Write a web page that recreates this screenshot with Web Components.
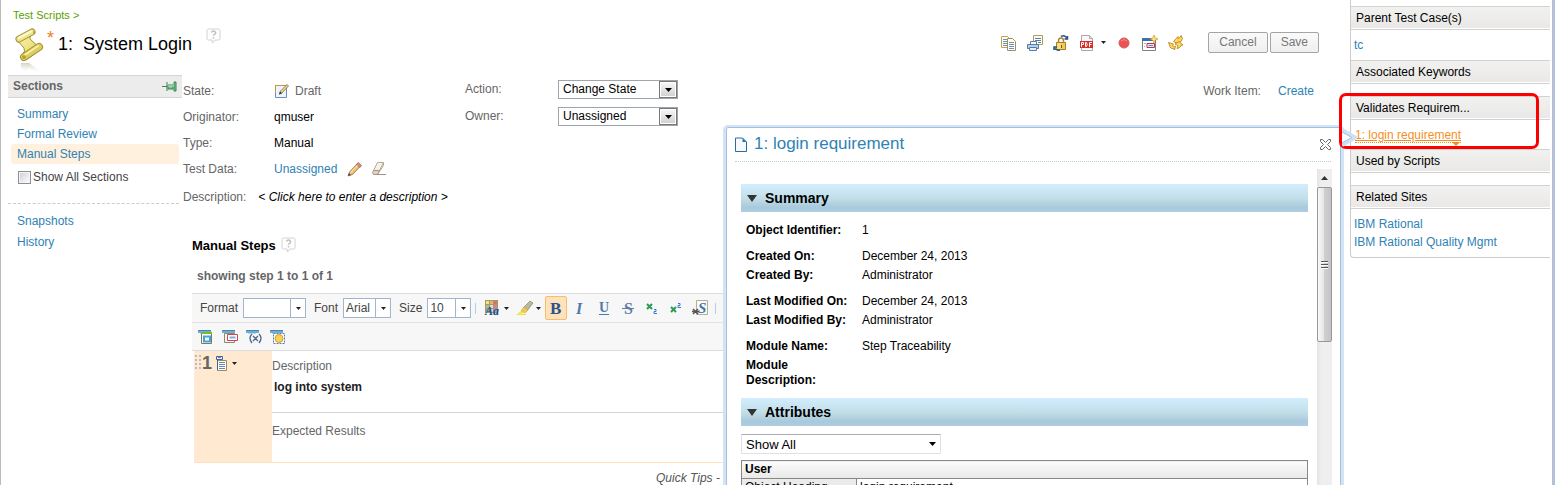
<!DOCTYPE html>
<html lang="en">
<head>
<meta charset="utf-8">
<title>1: System Login</title>
<style>
    html, body {
        margin: 0;
        height: 100%;
        overflow: hidden;
    }

    body {
        font-family: "Liberation Sans", Arial, sans-serif;
        font-size: 12px;
        line-height: 15px;
        color: #000;
        background: #fff;
        --qm-link: #2f82b4;
        --qm-label: #666;
        --qm-line: #d5d5d5;
        --qm-accent: #f3901d;
    }
</style>
</head>
<body>
<qm-app></qm-app>

<!--
    Application shell: editor on the left, link sidebar on the right
-->
<template id="qm-app-template">
    <style>
        :host {
            display: flex;
            position: relative;
            box-sizing: border-box;
            height: 100vh;
            overflow: hidden;
            border-left: 1px solid #bbb;
            border-right: 3px solid #b4bfd8;
        }

        main {
            flex: 1;
            min-width: 0;
            padding: 8px 31px 0 7px;
        }

        .columns {
            display: flex;
            gap: 1px;
        }

        .content {
            flex: 1;
            min-width: 0;
        }
    </style>
    <main>
        <qm-header></qm-header>
        <div class="columns">
            <qm-sections></qm-sections>
            <div class="content">
                <qm-properties></qm-properties>
                <qm-steps></qm-steps>
            </div>
        </div>
    </main>
    <qm-sidebar></qm-sidebar>
    <qm-preview heading="1: login requirement"></qm-preview>
</template>

<!--
    Breadcrumb, title and page actions
-->
<template id="qm-header-template">
    <style>
        :host { display: block; }

        .crumb {
            display: block;
            padding-left: 5px;
            font-size: 11px;
            color: #5da000;
            text-decoration: none;
        }

        header {
            display: flex;
            align-items: flex-start;
            height: 52px;
        }

        .script { margin: 5px 0 0 7px; }

        .star {
            padding: 8px 4px 0 3px;
            font-size: 18px;
            color: #ee7f22;
        }

        h1 {
            margin: 11px 14px 0 0;
            font-size: 18px;
            font-weight: normal;
            line-height: 20px;
            white-space: pre;
        }

        .help { margin-top: 5px; }

        .actions {
            display: flex;
            align-items: center;
            gap: 10px;
            margin: 9px 0 0 auto;
        }

        .menu {
            display: flex;
            align-items: center;
            gap: 6px;
        }

        .buttons {
            display: flex;
            gap: 2px;
            margin-left: 14px;
        }

        button {
            box-sizing: border-box;
            height: 21px;
            padding: 0 10px;
            font: inherit;
            color: #777;
            background: linear-gradient(#fafafa, #efefef);
            border: 1px solid #a5a5a5;
            border-radius: 2px;
        }
    </style>
    <a class="crumb" href="#">Test Scripts &gt;</a>
    <header>
        <qm-icon class="script" name="script"></qm-icon>
        <span class="star">*</span>
        <h1>1:  System Login</h1>
        <qm-icon class="help" name="help"></qm-icon>
        <div class="actions">
            <qm-icon name="copy"></qm-icon>
            <qm-icon name="print"></qm-icon>
            <qm-icon name="lock"></qm-icon>
            <span class="menu"><qm-icon name="pdf"></qm-icon><qm-icon name="arrow"></qm-icon></span>
            <qm-icon name="record"></qm-icon>
            <qm-icon name="window"></qm-icon>
            <qm-icon name="refresh"></qm-icon>
            <span class="buttons">
                <button type="button">Cancel</button>
                <button type="button">Save</button>
            </span>
        </div>
    </header>
</template>

<!--
    Section navigation
-->
<template id="qm-sections-template">
    <style>
        :host {
            display: block;
            flex: 0 0 174px;
        }

        h2 {
            display: flex;
            align-items: center;
            justify-content: space-between;
            height: 21px;
            margin: 0;
            padding: 0 5px;
            font-size: 12px;
            color: #666;
            background: #ececec;
            border: solid var(--qm-line);
            border-width: 1px 0;
        }

        nav {
            margin-right: 3px;
            padding: 6px 0 0 3px;
        }

        nav + nav {
            margin-top: 18px;
            padding: 7px 0 0;
            border-top: 1px dashed #ccc;
        }

        a {
            display: block;
            padding-left: 6px;
            line-height: 20px;
            color: var(--qm-link);
            text-decoration: none;
            border-radius: 3px;
        }

        nav + nav a {
            padding-left: 9px;
            line-height: 21px;
        }

        a.current { background: #fff1de; }

        label {
            display: flex;
            align-items: center;
            gap: 2px;
            padding: 6px 0 0 7px;
            color: #444;
        }

        input {
            appearance: none;
            width: 13px;
            height: 13px;
            margin: 0;
            background: linear-gradient(135deg, #c9ced6, #fff);
            border: 1px solid #8e8f8f;
            box-shadow: inset 0 0 0 1px #f4f4f4;
        }
    </style>
    <h2>Sections <qm-icon name="pin"></qm-icon></h2>
    <nav>
        <a href="#">Summary</a>
        <a href="#">Formal Review</a>
        <a href="#" class="current">Manual Steps</a>
        <label><input type="checkbox"> Show All Sections</label>
    </nav>
    <nav>
        <a href="#">Snapshots</a>
        <a href="#">History</a>
    </nav>
</template>

<!--
    Script properties (state, owner, test data)
-->
<template id="qm-properties-template">
    <style>
        :host {
            display: block;
            padding-top: 3px;
        }

        .fields {
            display: flex;
            align-items: flex-start;
        }

        .details { flex: 0 0 282px; }
        .choices { margin-top: -2px; }
        .work { margin-left: auto; }

        .muted { color: var(--qm-label); }

        a {
            color: var(--qm-link);
            text-decoration: none;
        }

        .work a { padding: 0 5px 0 17px; }
        .data { padding-right: 4px; }

        .description {
            display: flex;
            align-items: center;
            gap: 12px;
            height: 30px;
            font-style: italic;
        }

        .description .muted { font-style: normal; }
    </style>
    <div class="fields">
        <div class="details">
            <qm-field label="State:"><qm-icon name="draft"></qm-icon><span class="muted">Draft</span></qm-field>
            <qm-field label="Originator:">qmuser</qm-field>
            <qm-field label="Type:">Manual</qm-field>
            <qm-field label="Test Data:">
                <a class="data" href="#">Unassigned</a>
                <qm-icon name="pencil"></qm-icon>
                <qm-icon name="eraser"></qm-icon>
            </qm-field>
        </div>
        <div class="choices">
            <qm-select label="Action:" value="Change State"></qm-select>
            <qm-select label="Owner:" value="Unassigned"></qm-select>
        </div>
        <qm-field class="work" label="Work Item:" inline><a href="#">Create</a></qm-field>
    </div>
    <div class="description"><span class="muted">Description:</span><span>&lt; Click here to enter a description &gt;</span></div>
</template>

<template id="qm-field-template">
    <style>
        :host {
            display: flex;
            align-items: center;
            height: 26px;
        }

        .label {
            width: 91px;
            color: var(--qm-label);
        }

        :host([inline]) .label { width: auto; }

        .value {
            display: flex;
            align-items: center;
            gap: 6px;
        }
    </style>
    <span class="label"></span>
    <span class="value"><slot></slot></span>
</template>

<template id="qm-select-template">
    <style>
        :host {
            display: flex;
            align-items: center;
            height: 27px;
        }

        label {
            width: 93px;
            color: var(--qm-label);
        }

        .box {
            display: grid;
            grid-template-columns: 1fr 18px;
            width: 120px;
            height: 19px;
            box-sizing: border-box;
            border: 1px solid #9ea5ad;
        }

        select {
            appearance: none;
            grid-area: 1 / 1 / 2 / 3;
            min-width: 0;
            padding: 0 20px 0 4px;
            font: inherit;
            color: #000;
            background: #fff;
            border: 0;
        }

        .arrow {
            grid-area: 1 / 2;
            display: grid;
            place-items: center;
            pointer-events: none;
            background: linear-gradient(#f8f8f8, #cfcfcf);
            border: 1px solid #777;
            box-shadow: inset 0 0 0 1px #fff;
        }
    </style>
    <label for="select"></label>
    <span class="box">
        <select id="select"><option></option></select>
        <span class="arrow"><qm-icon name="arrow-wide"></qm-icon></span>
    </span>
</template>

<!--
    Manual steps editor
-->
<template id="qm-steps-template">
    <style>
        :host {
            display: block;
            padding: 24px 0 0 9px;
        }

        h2 {
            display: flex;
            align-items: center;
            gap: 5px;
            height: 18px;
            margin: 0;
            font-size: 13px;
        }

        .range {
            margin: 15px 0 9px 5px;
            font-weight: bold;
            color: #666;
        }

        .step {
            display: flex;
            min-height: 111px;
            margin-left: 2px;
            border-bottom: 1px solid #ffe2bd;
        }

        .handle {
            display: flex;
            align-items: flex-start;
            flex: 0 0 78px;
            background: #ffe9d0;
        }

        .handle b {
            padding: 2px 4px 0 1px;
            font-size: 18px;
            line-height: 20px;
            color: #666;
        }

        .handle .dots { margin-top: 3px; }
        .handle .doc { margin: 4px 5px 0 0; }
        .handle .down { margin-top: 11px; }

        .text { flex: 1; }

        .cell {
            box-sizing: border-box;
            padding-top: 8px;
            color: var(--qm-label);
        }

        .cell:first-child {
            height: 62px;
            border-bottom: 1px solid var(--qm-line);
        }

        .cell + .cell { padding-top: 11px; }

        p {
            margin: 6px 0 0 2px;
            font-weight: bold;
            color: #222;
        }

        .tips {
            margin: 8px 0 0 464px;
            font-style: italic;
            color: #555;
        }
    </style>
    <h2>Manual Steps <qm-icon name="help"></qm-icon></h2>
    <div class="range">showing step 1 to 1 of 1</div>
    <qm-toolbar></qm-toolbar>
    <div class="step">
        <div class="handle">
            <qm-icon class="dots" name="dots"></qm-icon>
            <b>1</b>
            <qm-icon class="doc" name="step"></qm-icon>
            <qm-icon class="down" name="arrow"></qm-icon>
        </div>
        <div class="text">
            <div class="cell">Description<p>log into system</p></div>
            <div class="cell">Expected Results</div>
        </div>
    </div>
    <div class="tips">Quick Tips - U</div>
</template>

<template id="qm-toolbar-template">
    <style>
        :host {
            display: block;
            background: #f7f7f7;
            border: solid #ddd;
            border-width: 1px 0;
        }

        .row {
            display: flex;
            align-items: center;
            gap: 8px;
            height: 28px;
            padding-left: 8px;
        }

        .row + .row {
            height: 27px;
            padding-left: 6px;
            border-top: 1px solid #e2e2e2;
        }

        .sep {
            width: 1px;
            height: 11px;
            margin: 0 1px 0 -4px;
            background: #b3cdf2;
        }

        button {
            display: flex;
            align-items: center;
            justify-content: center;
            gap: 3px;
            box-sizing: border-box;
            height: 24px;
            padding: 0;
            background: none;
            border: 1px solid transparent;
            border-radius: 2px;
        }

        .format { display: flex; gap: 2px; }
        .format button { width: 22px; }

        .format button.on {
            background: #fde2bb;
            border-color: #fbbb6e;
        }

        .menus {
            display: flex;
            gap: 6px;
            margin: 0 -5px 0 -1px;
        }

        .row + .row button { width: 16px; }
    </style>
    <div class="row">
        <qm-combo label="Format" width="63"></qm-combo>
        <qm-combo label="Font" value="Arial" width="48"></qm-combo>
        <qm-combo label="Size" value="10" width="44"></qm-combo>
        <span class="sep"></span>
        <span class="menus">
            <button type="button" aria-label="Text color"><qm-icon name="color"></qm-icon><qm-icon name="arrow"></qm-icon></button>
            <button type="button" aria-label="Highlight"><qm-icon name="highlight"></qm-icon><qm-icon name="arrow"></qm-icon></button>
        </span>
        <span class="format">
            <button type="button" class="on" aria-label="Bold"><qm-icon name="bold"></qm-icon></button>
            <button type="button" aria-label="Italic"><qm-icon name="italic"></qm-icon></button>
            <button type="button" aria-label="Underline"><qm-icon name="underline"></qm-icon></button>
            <button type="button" aria-label="Strikethrough"><qm-icon name="strike"></qm-icon></button>
            <button type="button" aria-label="Subscript"><qm-icon name="sub"></qm-icon></button>
            <button type="button" aria-label="Superscript"><qm-icon name="sup"></qm-icon></button>
            <button type="button" aria-label="Special paste"><qm-icon name="special"></qm-icon></button>
        </span>
        <span class="sep"></span>
    </div>
    <div class="row">
        <button type="button" aria-label="Insert step"><qm-icon name="row-insert"></qm-icon></button>
        <button type="button" aria-label="Insert keyword"><qm-icon name="row-keyword"></qm-icon></button>
        <button type="button" aria-label="Insert variable"><qm-icon name="row-variable"></qm-icon></button>
        <button type="button" aria-label="Insert asset"><qm-icon name="row-asset"></qm-icon></button>
    </div>
</template>

<template id="qm-combo-template">
    <style>
        :host {
            display: flex;
            align-items: center;
            gap: 5px;
            color: #444;
        }

        .box {
            display: grid;
            grid-template-columns: 1fr 15px;
            box-sizing: border-box;
            height: 20px;
            background: #fff;
            border: 1px solid #a3b5cd;
        }

        select {
            appearance: none;
            grid-area: 1 / 1 / 2 / 3;
            min-width: 0;
            padding: 0 16px 0 2px;
            font: inherit;
            color: #444;
            background: none;
            border: 0;
        }

        .arrow {
            grid-area: 1 / 2;
            display: grid;
            place-items: center;
            pointer-events: none;
            border-left: 1px solid #a3b5cd;
        }
    </style>
    <label for="select"></label>
    <span class="box">
        <select id="select"><option></option></select>
        <span class="arrow"><qm-icon name="arrow"></qm-icon></span>
    </span>
</template>

<!--
    Sidebar with linked artifacts
-->
<template id="qm-sidebar-template">
    <style>
        :host {
            display: block;
            position: relative;
            flex: 0 0 200px;
            padding-right: 2px;
        }

        .panel {
            padding: 6px 0 0;
            border: solid #ccc;
            border-width: 0 0 1px 1px;
            border-radius: 0 0 0 4px;
        }

        a {
            color: var(--qm-link);
            text-decoration: none;
        }

        a.active {
            position: relative;
            display: block;
            width: max-content;
            margin: 2px 0 0 1px;
            line-height: 14px;
            color: var(--qm-accent);
            text-decoration: underline;
            border-bottom: 1px dotted var(--qm-accent);
        }

        a.active::after {
            content: "";
            position: absolute;
            right: 1px;
            top: 14px;
            border: 4px solid transparent;
            border-top-color: var(--qm-accent);
            border-bottom: 0;
        }

        /* highlight ring around the requirement link */
        .ring {
            position: absolute;
            z-index: 2;
            left: -11px;
            top: 93px;
            width: 194px;
            height: 50px;
            border: 3px solid #f00;
            border-radius: 7px;
        }
    </style>
    <div class="panel">
        <qm-links heading="Parent Test Case(s)"><a href="#">tc</a></qm-links>
        <qm-links heading="Associated Keywords"></qm-links>
        <qm-links heading="Validates Requirem..."><a class="active" href="#">1: login requirement</a></qm-links>
        <qm-links heading="Used by Scripts"></qm-links>
        <qm-links heading="Related Sites"><a href="#">IBM Rational</a><a href="#">IBM Rational Quality Mgmt</a></qm-links>
    </div>
    <div class="ring"></div>
</template>

<template id="qm-links-template">
    <style>
        :host { display: block; }

        h3 {
            box-sizing: border-box;
            height: 24px;
            margin: 0;
            padding-left: 5px;
            font-size: 12px;
            font-weight: normal;
            line-height: 22px;
            background: linear-gradient(#f1f1f0, #e9e8e7);
            border: solid #d2d2d2;
            border-width: 1px 0;
            box-shadow: inset 0 -1px #fff;
        }

        .body {
            display: flex;
            flex-direction: column;
            padding: 6px 0 6px 3px;
            line-height: 18px;
        }
    </style>
    <h3></h3>
    <div class="body"><slot></slot></div>
</template>

<!--
    Rich hover preview of the linked requirement
-->
<template id="qm-preview-template">
    <style>
        :host {
            position: absolute;
            right: 208px;
            top: 125px;
            bottom: -6px;
            display: flex;
            flex-direction: column;
            box-sizing: border-box;
            width: 621px;
            background: #fff;
            border: 3px solid #d3e3f4;
            border-top-width: 2px;
            border-radius: 5px;
            box-shadow: inset 0 0 0 1px #a3c2e2;
        }

        header {
            display: flex;
            align-items: center;
            gap: 7px;
            height: 34px;
            margin: 0 10px 0 9px;
            border-bottom: 1px dotted #b9cfd2;
        }

        h2 {
            flex: 1;
            margin: 0;
            font-size: 17px;
            font-weight: normal;
            line-height: 20px;
            color: #2f82b4;
        }

        .pointer {
            position: absolute;
            z-index: 3;
            left: 616px;
            top: 1px;
        }

        .view {
            display: flex;
            flex: 1;
            min-height: 0;
            gap: 9px;
            padding: 7px 9px 0 15px;
        }

        .page {
            flex: 1;
            min-width: 0;
            padding-top: 15px;
            overflow: hidden;
        }

        h3 {
            display: flex;
            align-items: center;
            gap: 8px;
            height: 28px;
            margin: 0;
            padding-left: 6px;
            font-size: 14px;
            background: linear-gradient(#d3edfe, #c2dfe8 50%, #a8c9dc 85%, #b0cde2);
        }

        dl {
            display: grid;
            grid-template-columns: 106px 1fr;
            column-gap: 10px;
            margin: 9px 5px 8px;
        }

        dt, dd {
            margin: 0;
            padding: 2px 0;
        }

        dt { font-weight: bold; }

        .gap { margin-top: 7px; }

        .filter {
            display: grid;
            grid-template-columns: 1fr 16px;
            align-items: center;
            width: 200px;
            height: 20px;
            box-sizing: border-box;
            margin: 8px 0 6px;
            border: 1px solid #dfe1ea;
            border-top-color: #ababb3;
            border-radius: 1px;
        }

        select {
            appearance: none;
            grid-area: 1 / 1 / 2 / 3;
            padding: 0 18px 0 4px;
            font: inherit;
            font-size: 13px;
            color: #000;
            background: none;
            border: 0;
        }

        .filter qm-icon {
            grid-area: 1 / 2;
            justify-self: center;
            pointer-events: none;
        }

        table {
            width: 100%;
            border-collapse: collapse;
            table-layout: fixed;
        }

        th, td {
            height: 17px;
            padding: 0 3px;
            text-align: left;
            border: 1px solid #888;
        }

        thead th { background: linear-gradient(#fcfcfc, #e8e8e8); }

        tbody th {
            font-weight: normal;
            background: #ebebeb;
        }

        .scroll {
            display: flex;
            flex-direction: column;
            flex: 0 0 15px;
            background: linear-gradient(90deg, #e4e4e4, #efefef 30%);
        }

        .up {
            display: grid;
            place-items: center;
            height: 18px;
        }

        .thumb {
            display: grid;
            place-items: center;
            box-sizing: border-box;
            height: 155px;
            background: linear-gradient(90deg, #f8f8f8, #e6e6e6 45%, #cfcfd1 50%, #c4c4c6);
            border: 1px solid #989898;
            border-radius: 2px;
        }
    </style>
    <header>
        <qm-icon name="page"></qm-icon>
        <h2></h2>
        <qm-icon name="close"></qm-icon>
    </header>
    <svg class="pointer" width="15" height="20" viewBox="0 0 15 20">
        <path d="M0 1L14 9.500L0 18z" fill="#fff"/>
        <path d="M0 2L13 9.500L0 17" fill="none" stroke="#cfe0f2" stroke-width="4"/>
        <path d="M0 4L10 9.500L0 15" fill="none" stroke="#a3c2e2"/>
    </svg>
    <div class="view">
        <div class="page">
            <h3><qm-icon name="twisty"></qm-icon>Summary</h3>
            <dl>
                <dt>Object Identifier:</dt><dd>1</dd>
                <dt class="gap">Created On:</dt><dd class="gap">December 24, 2013</dd>
                <dt>Created By:</dt><dd>Administrator</dd>
                <dt class="gap">Last Modified On:</dt><dd class="gap">December 24, 2013</dd>
                <dt>Last Modified By:</dt><dd>Administrator</dd>
                <dt class="gap">Module Name:</dt><dd class="gap">Step Traceability</dd>
                <dt>Module Description:</dt><dd></dd>
            </dl>
            <h3><qm-icon name="twisty"></qm-icon>Attributes</h3>
            <div class="filter">
                <select aria-label="Attributes shown"><option>Show All</option></select>
                <qm-icon name="arrow-wide"></qm-icon>
            </div>
            <table>
                <colgroup><col style="width: 115px"><col></colgroup>
                <thead><tr><th colspan="2">User</th></tr></thead>
                <tbody><tr><th>Object Heading</th><td>login requirement</td></tr></tbody>
            </table>
        </div>
        <div class="scroll">
            <span class="up"><qm-icon name="scroll-up"></qm-icon></span>
            <span class="thumb"><qm-icon name="grip"></qm-icon></span>
        </div>
    </div>
</template>

<script>
    // Icon artwork: [width, height, markup]
    const rowTop = '<path d="M0 1h13v3H0z" fill="#72add1"/><path d="M0 1h13v1H0z" fill="#4586aa"/><path d="M2 4h8v1H2z" fill="#b3d6e8"/>';

    const ICONS = {
        'script': [29, 46, `
            <defs>
                <linearGradient id="g" x2="1" y2="1"><stop offset="0" stop-color="#fbf6bd"/><stop offset=".6" stop-color="#ebdf78"/><stop offset="1" stop-color="#c9b943"/></linearGradient>
                <linearGradient id="s" x2="0" y2="1"><stop offset="0" stop-color="#bbb694" stop-opacity=".6"/><stop offset="1" stop-color="#fff" stop-opacity="0"/></linearGradient>
            </defs>
            <path d="M2 12l7 8q2 3-2 7l4 5 15-11-11-10q-1-4 5-6z" fill="url(#g)" stroke="#a08f30" stroke-linejoin="round"/>
            <g stroke-linecap="round">
                <path d="M4 11L17 4" stroke="#a08f30" stroke-width="7"/>
                <path d="M4 11L17 4" stroke="#eee48a" stroke-width="5"/>
                <path d="M4 10L16 3.500" stroke="#fbf8cf" stroke-width="2"/>
                <path d="M9 29L24 19" stroke="#a08f30" stroke-width="8"/>
                <path d="M9 29L24 19" stroke="#dccd5c" stroke-width="6"/>
                <path d="M9 27.500L23 18" stroke="#f7f1ae" stroke-width="2"/>
            </g>
            <circle cx="9" cy="29" r="2" fill="#b5a236"/>
            <path d="M18 4q2-1 1 2" fill="none" stroke="#a08f30"/>
            <path d="M6 35h8l12 9-4 2-8-5-5 2q-4-3-3-8z" fill="url(#s)"/>`],
        'help': [15, 16, `
            <path d="M2.500 1h10q1.500 0 1.500 1.500v8q0 1.500-1.500 1.500H9l-2.500 3L6 12H2.500Q1 12 1 10.500v-8Q1 1 2.500 1z" fill="#fff" stroke="#d2d2d2"/>
            <path d="M5.500 4.500q.5-1.500 2-1.500T9.700 4.700c0 1.600-2.200 1.500-2.200 3.100M7.500 9v1.500" fill="none" stroke="#bdbdbd" stroke-width="1.500"/>`],
        'copy': [16, 16, `
            <g stroke="#c2a24f" fill="#fffdf0"><path d="M.5 1.500h6l3 3v8h-9z"/><path d="M6.500 3.500h5l3 3v9h-8z" stroke="#9b9260"/></g>
            <path d="M2 4.500h4M2 6.500h4M2 8.500h4M2 10.500h4M8 7.500h5M8 9.500h5M8 11.500h5M8 13.500h5" stroke="#6c90c4"/>`],
        'print': [16, 16, `
            <path d="M6.500.5h9v9h-9z" fill="#fffdf2" stroke="#b59b58"/>
            <path d="M8 3.500h6M8 5.500h6M11 7.500h3" stroke="#547db5"/>
            <path d="M3.500 6.500h6v4h-6z" fill="#fff" stroke="#5c7fac"/>
            <path d="M.5 9.500h11v4H.5z" fill="#b9d0e9" stroke="#557ba7"/>
            <path d="M2.500 12.500h7v3h-7z" fill="#e8f2ff" stroke="#557ba7"/>`],
        'lock': [16, 16, `
            <path d="M5.500 8V6q0-3 2.500-3t2.500 3v2" fill="none" stroke="#a98532" stroke-width="1.500"/>
            <path d="M3.500 7.500h9v7h-9z" fill="#f0cb5a" stroke="#a97d1c"/>
            <path d="M5 8v6M7 8v6" stroke="#ffebaa"/><path d="M8.500 10v3" stroke="#81500c"/>
            <path d="M8 1.500q4-2 6 2M11.500 4h3V1M7 15q-4 1-5.500-2M4 12H1v3" fill="none" stroke="#2d5680" stroke-width="1.500"/>`],
        'pdf': [16, 16, `
            <path d="M2.500.5h8l3 3v12h-11z" fill="#f8f8f8" stroke="#aaa"/><path d="M10.500.5v3h3" fill="#ddd" stroke="#aaa"/>
            <path d="M1 6h13v7H1z" fill="#d92d28"/>
            <path d="M2.500 12V7.500h2v2h-2M6.500 7.500v4h1q1.500-2 0-4h-1M10.500 12V7.500h2.500M10.500 9.500h2" fill="none" stroke="#fff"/>`],
        'record': [16, 16, '<circle cx="8" cy="8" r="5" fill="#eb5353" stroke="#d95a5a"/><path d="M5 6q3-3 6 0" fill="none" stroke="#f38b8b"/>'],
        'window': [16, 16, `
            <path d="M.5 3.500h13v12H.5z" fill="#fff" stroke="#7d8577"/><path d="M0 3h14v3H0z" fill="#3d70a8"/>
            <path d="M2 8.500h2M2 11.500h1" stroke="#9bb6d4"/>
            <path d="M5 8.500h7.500v4H5z" fill="#dceaff" stroke="#ca3045"/><path d="M6.500 10.500h4.500" stroke="#5f8cc5"/>
            <path d="M12 0l1.200 2.800L16 4l-2.800 1.200L12 8l-1.200-2.800L8 4l2.800-1.200z" fill="#ffe27a" stroke="#bb8b24" stroke-width=".6"/>`],
        'refresh': [16, 16, `
            <g fill="#ffd55e" stroke="#b17c18" stroke-width=".8" stroke-linejoin="round">
                <path d="M5.500 6.500L10 1.500v2q3-1 3-3 3 3 0 6l-1.500 1v2z"/>
                <path d="M.5 7.500l5 1.500-1 1.500q2 2 3 .5l-1 4-1-1.500Q2 14 1.500 10z"/>
                <path d="M7 9l4-2.500 4 3.500-2 .5q-1 3-4 3 1-2 .5-3z"/>
            </g>`],
        'arrow': [5, 3, '<path d="M0 0h5L2.500 3z" fill="#222"/>'],
        'arrow-wide': [7, 4, '<path d="M0 0h7L3.500 4z" fill="#000"/>'],
        'pin': [15, 11, '<path d="M0 5.500h5" stroke="#4d7c5c"/><path d="M5 1v9M6 4h5v4H6zM12 1h2v9h-2z" fill="#82c291" stroke="#348451"/><path d="M6 5h6" stroke="#c8eccd"/>'],
        'draft': [15, 16, `
            <path d="M1.500 2.500h11v12h-11z" fill="#eef4fd" stroke="#6c8fbb"/><path d="M1 2.500h12M1.500 2v8" stroke="#c09a40"/>
            <path d="M5.500 11l1-3 6.500-6.500 1.500 1.500L8 10z" fill="#ecd48e" stroke="#7c6848" stroke-width=".8"/><path d="M5 11.500l1-3 2 2z" fill="#333"/>`],
        'pencil': [16, 16, '<path d="M1 15l1.500-4L11 2l3 2.500L5.500 13.500z" fill="#f2c276" stroke="#94672d" stroke-width=".8"/><path d="M11 1.500L14.500 4.500 13 6.500 9.500 3.500z" fill="#d4908d" stroke="#a16a66" stroke-width=".8"/><path d="M3.500 11.500l7-7" stroke="#ffe9b5"/><path d="M1 15l1-3 2 2z" fill="#355084"/>'],
        'eraser': [18, 16, '<path d="M4.500 9.500l4-8h6l-4 8z" fill="#f7f1e9" stroke="#b5a897"/><path d="M4.500 9.500h6l-2 4h-4l-1-2z" fill="#ddd1c2" stroke="#a49887"/><path d="M8.500 13.500l6-9v-3" fill="none" stroke="#b5a897"/><path d="M8 13.500h9" stroke="#9f9486"/>'],
        'dots': [7, 16, '<path d="M1 1h2v2H1zM5 1h2v2H5zM1 5h2v2H1zM5 5h2v2H5zM1 9h2v2H1zM5 9h2v2H5zM1 13h2v2H1zM5 13h2v2H5z" fill="#b9bbbe"/>'],
        'step': [11, 16, '<path d="M1.500 5.500h9v10h-9z" fill="#fff" stroke="#a28a4d"/><path d="M.5 1.500h6v3h-6zM1.500 5v10" fill="#e5efff" stroke="#456394"/><path d="M2 2.500h3M3 7.500h6M3 9.500h6M3 11.500h6M3 13.500h6" stroke="#6787b9"/>'],
        'color': [16, 16, `
            <path d="M0 0h13v13H0z" fill="#a2987c"/>
            <path d="M1 1h3v3H1z" fill="#f5e46b"/><path d="M5 1h3v3H5z" fill="#e7b965"/><path d="M9 1h3v3H9z" fill="#dc7158"/>
            <path d="M1 5h3v3H1z" fill="#a3c86b"/><path d="M5 5h3v3H5z" fill="#f5d5b4"/><path d="M9 5h3v3H9z" fill="#e87b8d"/>
            <path d="M1 9h3v3H1z" fill="#78aa9d"/><path d="M5 9h3v3H5z" fill="#c7cce9"/><path d="M9 9h3v3H9z" fill="#b5a3cf"/>
            <text x="0" y="15" font-family="Liberation Serif" font-style="italic" font-weight="bold" font-size="12" fill="#254c83">Aa</text>`],
        'highlight': [16, 16, '<path d="M6 8l7-7 3 2-6 8z" fill="#bdb7a2" stroke="#7e785f" stroke-width=".6"/><path d="M7 7l4 3-3 3-4-2z" fill="#eecb4a" stroke="#c9a53a" stroke-width=".6"/><path d="M4 11l4 2-8 1z" fill="#f7e13c"/><path d="M0 14.500h9" stroke="#f2dc4b"/>'],
        'bold': [14, 16, '<text x="1" y="14" font-family="Liberation Serif" font-weight="bold" font-size="17" fill="#2c5388">B</text>'],
        'italic': [14, 16, '<text x="3" y="14" font-family="Liberation Serif" font-style="italic" font-weight="bold" font-size="16" fill="#4f79ab">I</text>'],
        'underline': [14, 16, '<text x="2" y="12" font-family="Liberation Serif" font-weight="bold" font-size="14" fill="#4f79ab">U</text><path d="M2 14.500h10" stroke="#4f79ab"/>'],
        'strike': [14, 16, '<text x="3" y="14" font-family="Liberation Serif" font-weight="bold" font-size="16" fill="#5e7ea8">S</text><path d="M1 8.500h12" stroke="#5e7ea8"/>'],
        'sub': [14, 16, '<path d="M2 4l5 5M7 4L2 9" stroke="#2b9a53" stroke-width="2"/><path d="M9 9.500h2v2H9v2h3" fill="none" stroke="#3c78d8"/>'],
        'sup': [14, 16, '<path d="M2 7l5 5M7 7l-5 5" stroke="#2b9a53" stroke-width="2"/><path d="M9 3.500h2v2H9v2h3" fill="none" stroke="#3c78d8"/>'],
        'special': [16, 16, '<path d="M4.500.5h11v14h-11z" fill="#fbfaf4" stroke="#b7ae91"/><text x="6" y="13" font-family="Liberation Serif" font-style="italic" font-weight="bold" font-size="15" fill="#4377b5">S</text><path d="M1 9l5 5M6 9l-5 5M0 11.500h7" stroke="#555" stroke-width="1.500"/>'],
        'row-insert': [16, 16, rowTop + '<path d="M3.500 4.500h10v10h-10z" fill="#fff" stroke="#7e7b55"/><path d="M4 4h10" stroke="#79bd25" stroke-width="2"/><path d="M6 7.500h6v5H6z" fill="#fff" stroke="#45a4d7" stroke-width="2"/>'],
        'row-keyword': [16, 16, rowTop + '<path d="M2.500 4.500h10v9h-10z" fill="#f8f8f2" stroke="#8b8973"/><path d="M5.500 5.500h10v6h-10z" fill="#fff" stroke="#d6414e"/><path d="M7.500 8.500h6" stroke="#83aad9" stroke-width="2"/>'],
        'row-variable': [16, 16, rowTop + '<path d="M6 5q-4 4 0 9M13 5q4 4 0 9M7 7l5 5M12 7l-5 5" fill="none" stroke="#4c6a8a" stroke-width="1.300"/>'],
        'row-asset': [16, 16, rowTop + '<path d="M3.500 4.500h11v10h-11z" fill="#fff" stroke="#567bc3" stroke-dasharray="2 1"/><circle cx="9" cy="9.500" r="4" fill="#f9d354" stroke="#d59c30"/>'],
        'page': [12, 15, '<path d="M.5 1h7L11.500 5v9.500H.5z" fill="#f6faff" stroke="#286da0"/><path d="M7.500 1v4h4z" fill="#2975aa"/>'],
        'close': [11, 11, '<path d="M.5.5h2l3 3 3-3h2v2l-3 3 3 3v2h-2l-3-3-3 3h-2v-2l3-3-3-3z" fill="#fff" stroke="#686c60"/>'],
        'twisty': [10, 7, '<path d="M0 0h10L5 7z" fill="#333"/>'],
        'scroll-up': [7, 4, '<path d="M0 4h7L3.500 0z" fill="#333"/>'],
        'grip': [7, 8, '<path d="M0 .5h7M0 3.500h7M0 6.500h7" stroke="#555"/><path d="M0 1.500h7M0 4.500h7M0 7.500h7" stroke="#fff"/>']
    };

    // Base class: clones the template named after the element
    class QmElement extends HTMLElement {
        constructor() {
            super();
            this.attachShadow({mode: 'open'});
            const template = document.getElementById(`${this.localName}-template`);
            this.shadowRoot.appendChild(template.content.cloneNode(true));
        }

        setText(selector, attribute) {
            this.shadowRoot.querySelector(selector).textContent = this.getAttribute(attribute) || '';
        }
    }

    class QmIcon extends HTMLElement {
        constructor() {
            super();
            this.attachShadow({mode: 'open'});
        }

        connectedCallback() {
            const [width, height, markup] = ICONS[this.getAttribute('name')];
            this.shadowRoot.innerHTML = `
                <style>
                    :host { display: block; flex: none; }
                    svg { display: block; overflow: visible; }
                </style>
                <svg width="${width}" height="${height}" viewBox="0 0 ${width} ${height}" aria-hidden="true">${markup}</svg>`;
        }
    }

    class QmField extends QmElement {
        connectedCallback() {
            this.setText('.label', 'label');
        }
    }

    class QmSelect extends QmElement {
        connectedCallback() {
            this.setText('label', 'label');
            this.setText('option', 'value');
        }
    }

    class QmCombo extends QmSelect {
        connectedCallback() {
            super.connectedCallback();
            this.shadowRoot.querySelector('.box').style.width = `${this.getAttribute('width')}px`;
        }
    }

    class QmLinks extends QmElement {
        connectedCallback() {
            this.setText('h3', 'heading');
        }
    }

    class QmPreview extends QmElement {
        connectedCallback() {
            this.setText('h2', 'heading');
        }
    }

    customElements.define('qm-icon', QmIcon);
    customElements.define('qm-field', QmField);
    customElements.define('qm-select', QmSelect);
    customElements.define('qm-combo', QmCombo);
    customElements.define('qm-links', QmLinks);
    customElements.define('qm-preview', QmPreview);
    customElements.define('qm-header', class extends QmElement {});
    customElements.define('qm-sections', class extends QmElement {});
    customElements.define('qm-properties', class extends QmElement {});
    customElements.define('qm-toolbar', class extends QmElement {});
    customElements.define('qm-steps', class extends QmElement {});
    customElements.define('qm-sidebar', class extends QmElement {});
    customElements.define('qm-app', class extends QmElement {});
</script>
</body>
</html>
